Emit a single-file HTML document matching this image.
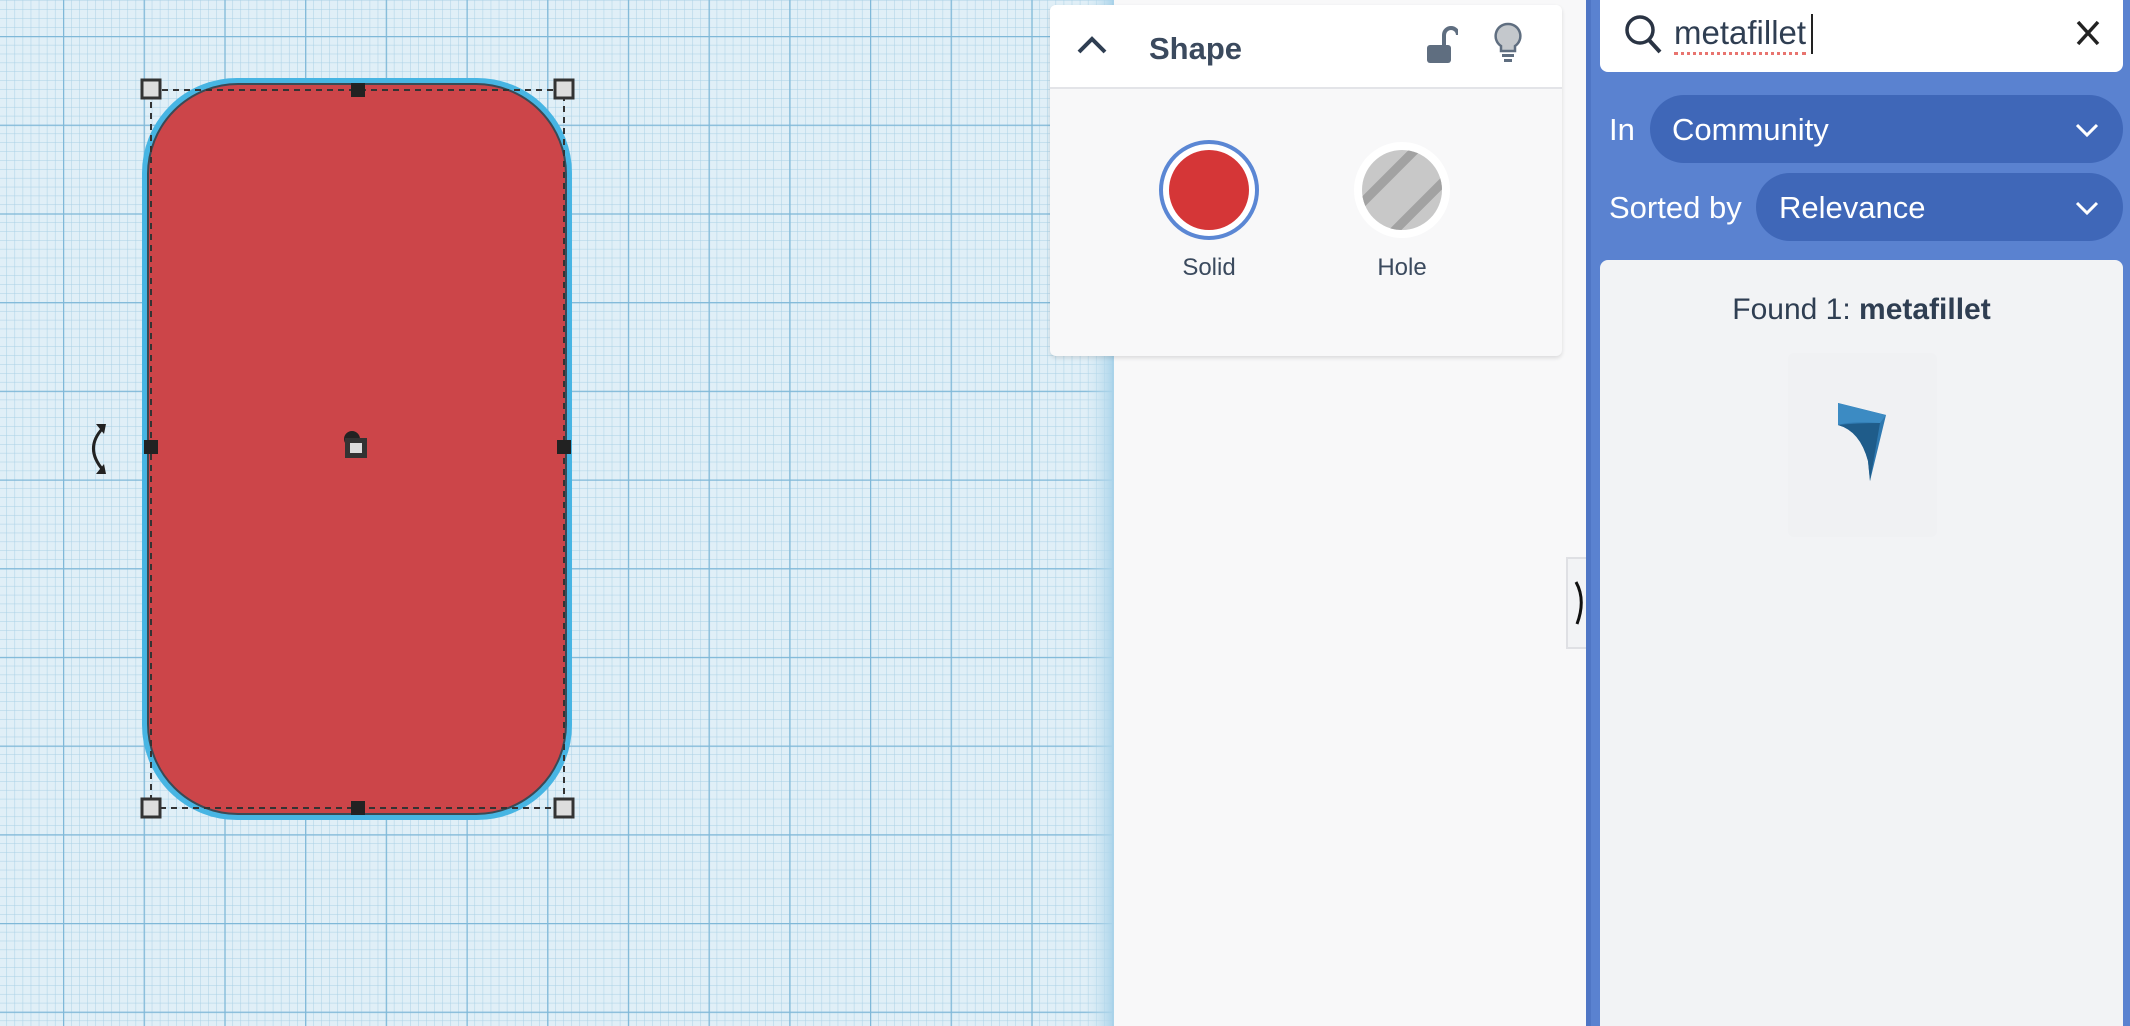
<!DOCTYPE html>
<html style="height:1026px;overflow:hidden"><head><meta charset="utf-8"><style>
body{margin:0;width:2130px;height:1026px;overflow:hidden;position:relative;font-family:"Liberation Sans",sans-serif;background:#f8f8f9}
.abs{position:absolute}
</style></head><body>
<svg class="abs" style="left:0;top:0" width="1114" height="1026">
<defs>
<pattern id="mn" x="63" y="36" width="8.07" height="8.87" patternUnits="userSpaceOnUse"><path d="M0 0V9M0 0H9" stroke="#a9d0e5" stroke-width="1" fill="none"/></pattern>
<pattern id="mj" x="63" y="36" width="80.7" height="88.7" patternUnits="userSpaceOnUse"><path d="M0.5 0V89M0 0.5H81" stroke="#7fb8d8" stroke-width="1.5" fill="none"/></pattern>
<linearGradient id="gl" x1="0" x2="1"><stop offset="0" stop-color="#cfe6f2" stop-opacity="0"/><stop offset="1" stop-color="#a9d3ea"/></linearGradient>
</defs>
<rect width="1114" height="1026" fill="#e0eff7"/>
<rect width="1114" height="1026" fill="url(#mn)"/>
<rect width="1114" height="1026" fill="url(#mj)"/>
<rect x="1085" width="29" height="1026" fill="url(#gl)"/>
<rect x="145" y="81" width="424" height="736" rx="92" fill="#cc4549" stroke="#47b5e3" stroke-width="6"/>
<rect x="148" y="84" width="418" height="730" rx="90" fill="none" stroke="#3a4a55" stroke-width="2"/>
<rect x="151" y="90" width="413" height="718" fill="none" stroke="#333" stroke-width="2" stroke-dasharray="6 5"/>
<g fill="#ddd" stroke="#333" stroke-width="3">
<rect x="142" y="80" width="18" height="18"/><rect x="555" y="80" width="18" height="18"/>
<rect x="142" y="799" width="18" height="18"/><rect x="555" y="799" width="18" height="18"/>
</g>
<g fill="#222"><rect x="351" y="83" width="14" height="14"/><rect x="144" y="440" width="14" height="14"/><rect x="557" y="440" width="14" height="14"/><rect x="351" y="801" width="14" height="14"/>
<circle cx="352" cy="439" r="8"/><rect x="345" y="438" width="22" height="20" fill="#333"/><rect x="350" y="443" width="12" height="10" fill="#ddd"/></g>
<path d="M103 428 Q84 448 103 470" stroke="#222" stroke-width="3" fill="none"/>
<path d="M96 424 L106 424 L104 434Z M96 474 L106 474 L104 464Z" fill="#222"/>
</svg>
<div class="abs" style="left:1114px;top:0;width:473px;height:1026px;background:#f8f8f9"></div>
<div class="abs" style="left:1050px;top:5px;width:512px;height:351px;background:#f8f8f9;border-radius:6px;box-shadow:0 2px 4px rgba(0,0,0,.12)">
<div style="height:82px;background:#fff;border-bottom:2px solid #e3e4e8;border-radius:6px 6px 0 0;position:relative">
<svg class="abs" style="left:26px;top:30px" width="34" height="20"><path d="M3 17L16 4L29 17" stroke="#2f3e52" stroke-width="4" fill="none"/></svg>
<div class="abs" style="left:99px;top:26px;font-size:31px;font-weight:bold;color:#3b4a5e">Shape</div>
<svg class="abs" style="left:374px;top:20px" width="34" height="40"><path d="M20 20V10a7 7 0 0 1 14 0" stroke="#5f6e80" stroke-width="4" fill="none"/><rect x="3" y="20" width="24" height="18" rx="3" fill="#5f6e80"/></svg>
<svg class="abs" style="left:442px;top:16px" width="34" height="44"><path d="M16 3a12 12 0 0 0-7 22v5h14v-5a12 12 0 0 0-7-22z" fill="#c4c8cc" stroke="#5f6e80" stroke-width="2.5"/><rect x="10" y="33" width="12" height="3" fill="#5f6e80"/><rect x="12" y="38" width="8" height="3" fill="#5f6e80"/></svg>
</div>
<svg class="abs" style="left:108px;top:130px" width="110" height="110"><circle cx="51" cy="55" r="48" fill="#fff" stroke="#5b87d4" stroke-width="4"/><circle cx="51" cy="55" r="40" fill="#d53637"/></svg>
<svg class="abs" style="left:300px;top:130px" width="110" height="110"><defs><clipPath id="hc"><circle cx="52" cy="55" r="40"/></clipPath></defs><circle cx="52" cy="55" r="48" fill="#fff"/><g clip-path="url(#hc)"><rect width="110" height="110" fill="#c8c8c8"/><g stroke="#a2a2a2" stroke-width="9"><path d="M0 80L80 0M-20 100L100 -20M20 120L120 20M-40 80L40 0M40 140L140 40"/></g></g></svg>
<div class="abs" style="left:108px;top:249px;width:102px;text-align:center;font-size:24px;color:#3b4a5e">Solid</div>
<div class="abs" style="left:300px;top:249px;width:104px;text-align:center;font-size:24px;color:#3b4a5e">Hole</div>
</div>
<div class="abs" style="left:1566px;top:557px;width:20px;height:92px;background:#f2f3f5;border:2px solid #dfe0e4;border-right:none;box-sizing:border-box"></div>
<svg class="abs" style="left:1574px;top:580px" width="12" height="50"><path d="M2 2 Q12 20 3 44" stroke="#111" stroke-width="3" fill="none"/></svg>
<div class="abs" style="left:1586px;top:0;width:544px;height:1026px;background:#5a82d0"></div>
<div class="abs" style="left:1586px;top:0;width:5px;height:1026px;background:#4f76c5"></div>
<div class="abs" style="left:1600px;top:-8px;width:523px;height:80px;background:#fff;border-radius:8px"></div>
<svg class="abs" style="left:1622px;top:12px" width="44" height="44"><circle cx="18" cy="18" r="13" stroke="#2a3444" stroke-width="3.5" fill="none"/><path d="M27 28L38 40" stroke="#2a3444" stroke-width="4"/></svg>
<div class="abs" style="left:1674px;top:14px;font-size:33px;color:#2f3e52;border-bottom:3px dotted #e8746f;line-height:38px">metafillet</div>
<div class="abs" style="left:1811px;top:14px;width:2px;height:40px;background:#222"></div>
<svg class="abs" style="left:2074px;top:18px" width="28" height="30"><path d="M4 4L24 26M24 4L4 26" stroke="#222" stroke-width="3.5"/></svg>
<div class="abs" style="left:1609px;top:112px;font-size:31px;color:#fff">In</div>
<div class="abs" style="left:1650px;top:95px;width:473px;height:68px;background:#3f67b8;border-radius:34px"></div>
<div class="abs" style="left:1672px;top:112px;font-size:31px;color:#fff">Community</div>
<svg class="abs" style="left:2074px;top:120px" width="26" height="20"><path d="M3 5L13 15L23 5" stroke="#fff" stroke-width="3" fill="none"/></svg>
<div class="abs" style="left:1609px;top:190px;font-size:31px;color:#fff">Sorted by</div>
<div class="abs" style="left:1756px;top:173px;width:367px;height:68px;background:#3f67b8;border-radius:34px"></div>
<div class="abs" style="left:1779px;top:190px;font-size:31px;color:#fff">Relevance</div>
<svg class="abs" style="left:2074px;top:198px" width="26" height="20"><path d="M3 5L13 15L23 5" stroke="#fff" stroke-width="3" fill="none"/></svg>
<div class="abs" style="left:1600px;top:260px;width:523px;height:766px;background:#f2f3f5;border-radius:8px 8px 0 0"></div>
<div class="abs" style="left:1600px;top:293px;width:523px;text-align:center;font-size:30px;color:#2f3e52">Found 1: <b>metafillet</b></div>
<div class="abs" style="left:1788px;top:353px;width:149px;height:184px;background:#f0f1f3;border-radius:6px"></div>
<svg class="abs" style="left:1830px;top:395px" width="80" height="90"><path d="M8 8L8 30Q30 36 38 66L40 86L56 20Z" fill="#2f79b0"/><path d="M8 8L56 20L50 28Q20 26 8 30Z" fill="#3c8bc3"/><path d="M8 30Q30 36 38 66L40 86L50 28Q26 28 8 30" fill="#1f5c8a"/></svg>
</body></html>
